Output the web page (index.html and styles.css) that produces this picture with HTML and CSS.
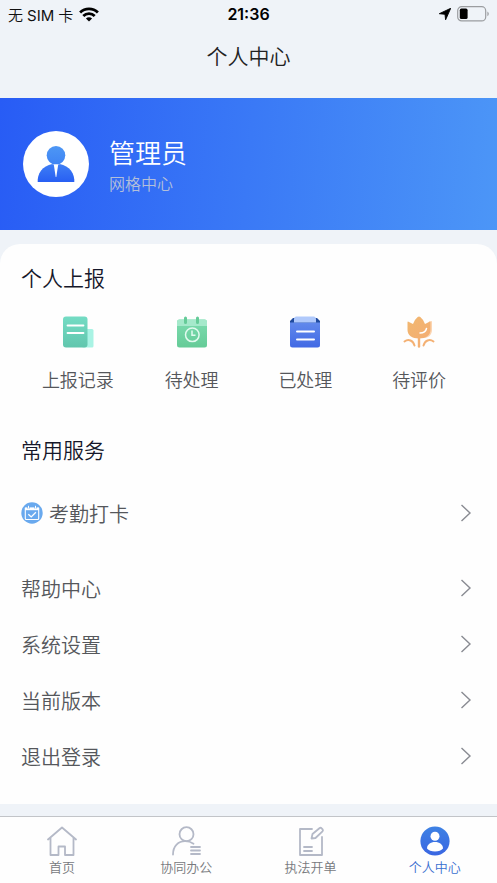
FILE: index.html
```html
<!DOCTYPE html>
<html lang="zh-CN">
<head>
<meta charset="utf-8">
<meta name="viewport" content="width=device-width, initial-scale=1">
<title>个人中心</title>
<link rel="stylesheet" href="styles.css">
</head>
<body>
<div class="status">
  <div class="status-side">
    <span class="carrier"><span>无</span><span class="sim">SIM</span><span>卡</span></span>
    <svg class="wifi" width="20" height="15" viewBox="0 0 20 15" fill="none" stroke="#000" stroke-width="2.8" aria-hidden="true">
      <path d="M1.1 5.5a12.7 12.7 0 0 1 17.8 0"/>
      <path d="M4.3 9a8.1 8.1 0 0 1 11.4 0"/>
      <path d="M10 14.6 6.9 11.5a4.4 4.4 0 0 1 6.2 0z" fill="#000" stroke="none"/>
    </svg>
  </div>
  <time class="clock">21:36</time>
  <div class="status-side status-end">
    <svg width="12" height="12" viewBox="0 0 12 12" aria-hidden="true"><path d="M11.7.3 6.6 11.8 6 6.3.3 5.7z" fill="#000" stroke="#000" stroke-width=".9" stroke-linejoin="round"/></svg>
    <svg width="32" height="16" viewBox="0 0 32 16" aria-hidden="true">
      <rect x=".7" y=".7" width="28" height="14.2" rx="4" fill="none" stroke="#9b9da0" stroke-width="1.2"/>
      <rect x="2.8" y="2.6" width="7.8" height="10.4" rx="1.6" fill="#000"/>
      <path d="M30.4 5.4q1.4.8 1.4 2.4t-1.4 2.4z" fill="#9b9da0"/>
    </svg>
  </div>
</div>
<header class="title-bar"><h1>个人中心</h1></header>

<main>
  <section class="profile">
    <div class="avatar">
      <svg width="38" height="38" viewBox="0 0 38 38" aria-hidden="true">
        <defs>
          <linearGradient id="head" x2="0" y2="1"><stop stop-color="#4d97f5"/><stop offset="1" stop-color="#3f84f4"/></linearGradient>
          <linearGradient id="torso" x2="0" y2="1"><stop stop-color="#3f7ff5"/><stop offset="1" stop-color="#285ff3"/></linearGradient>
        </defs>
        <path d="M.7 37V34.500C1.500 25.500 8.500 18.700 19 18.700S36.500 25.500 37.300 34.500V37z" fill="url(#torso)"/>
        <circle cx="19" cy="10.300" r="9.800" fill="#fff"/>
        <circle cx="19" cy="10.300" r="9.300" fill="url(#head)"/>
        <path d="M16.800 19.500h4.400L19.300 32h-.6z" fill="#fff"/>
      </svg>
    </div>
    <div class="identity">
      <h2 class="name">管理员</h2>
      <p class="dept">网格中心</p>
    </div>
  </section>

  <section class="card">
    <h3>个人上报</h3>
    <nav class="shortcuts" aria-label="个人上报">
      <a href="#records">
        <svg width="32" height="32" viewBox="0 0 32 32" aria-hidden="true">
          <defs><linearGradient id="mint" x2="0" y2="1"><stop stop-color="#74dcc4"/><stop offset="1" stop-color="#61c6ad"/></linearGradient></defs>
          <rect x="20" y="13" width="11.500" height="18.500" rx="1.500" fill="#a9f3e4"/>
          <rect x="1" y=".5" width="24.500" height="31" rx="3" fill="url(#mint)"/>
          <path d="M5.500 9.500h16M5.500 17h16" stroke="#fff" stroke-width="1.800" stroke-linecap="round"/>
        </svg>
        <span>上报记录</span>
      </a>
      <a href="#pending">
        <svg width="32" height="32" viewBox="0 0 32 32" aria-hidden="true">
          <defs><linearGradient id="green" x2="0" y2="1"><stop stop-color="#7ddcb0"/><stop offset="1" stop-color="#65cb97"/></linearGradient></defs>
          <rect x="1" y="3.500" width="30" height="28" rx="2.500" fill="url(#green)"/>
          <path d="M1 10V6Q1 3.500 3.500 3.500h25Q31 3.500 31 6v4z" fill="#a5e9cb"/>
          <path d="M9.500 2v4.500M21.500 2v4.500" stroke="#65cb98" stroke-width="3" stroke-linecap="round"/>
          <circle cx="16.300" cy="18.800" r="6.800" fill="none" stroke="#e2faef" stroke-width="1.500"/>
          <path d="M16 14.500v4.800h3.500" fill="none" stroke="#e2faef" stroke-width="1.500"/>
        </svg>
        <span>待处理</span>
      </a>
      <a href="#done">
        <svg width="32" height="32" viewBox="0 0 32 32" aria-hidden="true">
          <defs><linearGradient id="blue" x2="0" y2="1"><stop stop-color="#6189ec"/><stop offset="1" stop-color="#4169e4"/></linearGradient></defs>
          <path d="M1 7V5l3-3h24l3 3v2z" fill="#204b9e"/>
          <path d="M1 6.500h30V29q0 2.500-2.500 2.500h-25Q1 31.500 1 29z" fill="url(#blue)"/>
          <path d="M5 3q0-2.500 2-2.500h18q2 0 2 2.500v3.500H5z" fill="#b0c9fb"/>
          <path d="M8 15.500h17M8 23.500h17" stroke="#fff" stroke-width="2" stroke-linecap="round"/>
        </svg>
        <span>已处理</span>
      </a>
      <a href="#rate">
        <svg width="32" height="32" viewBox="0 0 32 32" fill="none" stroke-linecap="round" aria-hidden="true">
          <defs><linearGradient id="peach" x2="1" y2="1"><stop stop-color="#f1b870"/><stop offset="1" stop-color="#f4ad72"/></linearGradient></defs>
          <path d="M26 5.500q3-.8 3 0V14c0 5-4 8-8 8z" fill="#fbd5b2"/>
          <path d="M4.500 6.500q0-1.300 1-.7L10 8Q12 3 14.700 1q1.300-.9 2.600 0Q20 3 22 8l4.500-2.200q1-.5 1 .7v7.500c0 5-4.500 8.500-11.500 8.500S4.500 19 4.500 14z" fill="url(#peach)"/>
          <path d="M16 22v8.500" stroke="#f4b174" stroke-width="2.400"/>
          <path d="M1.500 25.500c4-3 8.500-1 10 4M30.500 25.500c-4-3-8.500-1-10 4" stroke="#f4b174" stroke-width="2"/>
          <path d="M17 17q5.500 0 6.500-4.500" stroke="#fff" stroke-width="1.500"/>
        </svg>
        <span>待评价</span>
      </a>
    </nav>

    <h3>常用服务</h3>
    <nav class="list" aria-label="常用服务">
      <a class="featured" href="#attendance">
        <svg class="lead" width="22" height="22" viewBox="0 0 22 22" fill="none" aria-hidden="true">
          <circle cx="11" cy="11" r="10.700" fill="#69a9ee"/>
          <path d="M4.300 6.200h13.400v10.300q0 1-1 1H5.300q-1 0-1-1z" stroke="#fff" stroke-width="1.100"/>
          <path d="M4 5.500h14v2.700H4z" fill="#fff"/>
          <path d="M7.500 3.800v2.800M14.500 3.800v2.800" stroke="#69a9ee" stroke-width="2.200"/>
          <path d="M7.500 3.800v2.800M14.500 3.800v2.800" stroke="#fff" stroke-width="1"/>
          <path d="m7.300 12.200 2.900 2.700 4.700-4.600" stroke="#fff" stroke-width="1.300"/>
        </svg>
        <span>考勤打卡</span>
        <svg class="chevron" width="12" height="18" viewBox="0 0 12 18" aria-hidden="true"><path d="m1.500 1 8.500 8-8.500 8"/></svg>
      </a>
      <a href="#help"><span>帮助中心</span><svg class="chevron" width="12" height="18" viewBox="0 0 12 18" aria-hidden="true"><path d="m1.500 1 8.500 8-8.500 8"/></svg></a>
      <a href="#settings"><span>系统设置</span><svg class="chevron" width="12" height="18" viewBox="0 0 12 18" aria-hidden="true"><path d="m1.500 1 8.500 8-8.500 8"/></svg></a>
      <a href="#version"><span>当前版本</span><svg class="chevron" width="12" height="18" viewBox="0 0 12 18" aria-hidden="true"><path d="m1.500 1 8.500 8-8.500 8"/></svg></a>
      <a href="#logout"><span>退出登录</span><svg class="chevron" width="12" height="18" viewBox="0 0 12 18" aria-hidden="true"><path d="m1.500 1 8.500 8-8.500 8"/></svg></a>
    </nav>
  </section>
</main>

<nav class="tabs" aria-label="主导航">
  <a href="#home">
    <svg width="30" height="30" viewBox="0 0 30 30" aria-hidden="true"><path d="M1 13.500 15 1.500l14 12M3.500 12v17h8v-8.500h6.500V29h8.500V12"/></svg>
    <span>首页</span>
  </a>
  <a href="#office">
    <svg width="30" height="30" viewBox="0 0 30 30" aria-hidden="true"><circle cx="15.500" cy="8.200" r="7"/><path d="M2 28.500C2 20 7.500 15.200 14 15.200q5 0 8.500 2.500M20 21h9M20 24.500h9M20 28h9"/></svg>
    <span>协同办公</span>
  </a>
  <a href="#enforce">
    <svg width="30" height="30" viewBox="0 0 30 30" aria-hidden="true"><path d="M16 3H4v26h22V11M8 21h8M8 25h8M15.500 12.500l1-4.500 7.200-6q1-.7 1.900.3l1 1.100q.8 1-.1 1.900L19.500 12z"/></svg>
    <span>执法开单</span>
  </a>
  <a class="active" href="#me" aria-current="page">
    <svg width="30" height="30" viewBox="0 0 30 30" aria-hidden="true">
      <defs><linearGradient id="me" x2="0" y2="1"><stop stop-color="#3e82e4"/><stop offset="1" stop-color="#3a66e2"/></linearGradient></defs>
      <circle cx="15" cy="15" r="14.600" fill="url(#me)"/>
      <circle cx="15" cy="10.300" r="4.500" fill="#fff"/>
      <path d="M7 22.500c0-4 3.500-6.500 8-6.500s8 2.500 8 6.500q-2.500 3-8 3t-8-3z" fill="#fff"/>
    </svg>
    <span>个人中心</span>
  </a>
</nav>
</body>
</html>
```
FILE: styles.css
```css
* { box-sizing: border-box; }

body {
  display: flex;
  flex-direction: column;
  min-height: 100vh;
  margin: 0;
  background: #eff3f8;
  color: #55575b;
  font-family: "Noto Sans CJK SC", sans-serif;
  font-weight: 350;
}

h1, h2, h3, p { margin: 0; font-weight: 350; }
a { color: inherit; text-decoration: none; }
svg { display: block; flex: none; }

.status {
  display: flex;
  align-items: center;
  height: 28px;
  padding: 0 8px;
  color: #111;
  font-family: Inter, "Noto Sans CJK SC", sans-serif;
  font-size: 15px;
}
.status-side { display: flex; flex: 1; align-items: center; gap: 6px; }
.status-end { justify-content: flex-end; }
.carrier { display: flex; align-items: baseline; gap: 4px; }
.sim { font-weight: 400; }
.clock { font-weight: 600; font-size: 16px; color: #000; }

.title-bar { height: 70px; text-align: center; }
.title-bar h1 { font-size: 21px; line-height: 54px; color: #222; }

main { flex: 1; }

.profile {
  display: flex;
  align-items: center;
  gap: 20px;
  height: 132px;
  padding: 0 23px;
  background: linear-gradient(95deg, #285cf5, #4c96f7);
}
.avatar {
  display: grid;
  place-items: center;
  width: 66px;
  height: 66px;
  border-radius: 50%;
  background: #fff;
}
.identity { padding-top: 2px; }
.name { font-size: 26px; line-height: 36px; color: #fff; }
.dept { font-size: 16px; line-height: 26px; color: #b3bfd9; }

.card {
  margin: 14px 0 12px;
  padding: 14px 21px 20px;
  border-radius: 20px 20px 0 0;
  background: #fefefe;
}
.card h3 { font-size: 21px; line-height: 38px; color: #15172a; }

.shortcuts {
  display: grid;
  grid-template-columns: repeat(4, 1fr);
  padding: 20px 0 36px;
}
.shortcuts a {
  display: flex;
  flex-direction: column;
  align-items: center;
  gap: 16px;
  font-size: 18px;
  line-height: 30px;
}

.list { padding: 17px 4px 0 0; }
.list a {
  display: flex;
  align-items: center;
  height: 56px;
  font-size: 20px;
}
.list .featured { margin-bottom: 19px; }
.lead { margin-right: 6px; }
.chevron {
  margin-left: auto;
  fill: none;
  stroke: #898b92;
  stroke-width: 1.4;
}

.tabs {
  display: grid;
  grid-template-columns: repeat(4, 1fr);
  height: 67px;
  padding-top: 9px;
  border-top: 1px solid #c2c4c8;
  background: #fefefe;
}
.tabs a {
  display: flex;
  flex-direction: column;
  align-items: center;
  font-size: 13px;
  line-height: 22px;
  color: #77797d;
}
.tabs svg {
  fill: none;
  stroke: #b4b9c7;
  stroke-width: 1.8;
  stroke-linecap: round;
  stroke-linejoin: round;
}
.tabs .active { color: #3a6fd0; }
.tabs .active svg { stroke: none; }
```
